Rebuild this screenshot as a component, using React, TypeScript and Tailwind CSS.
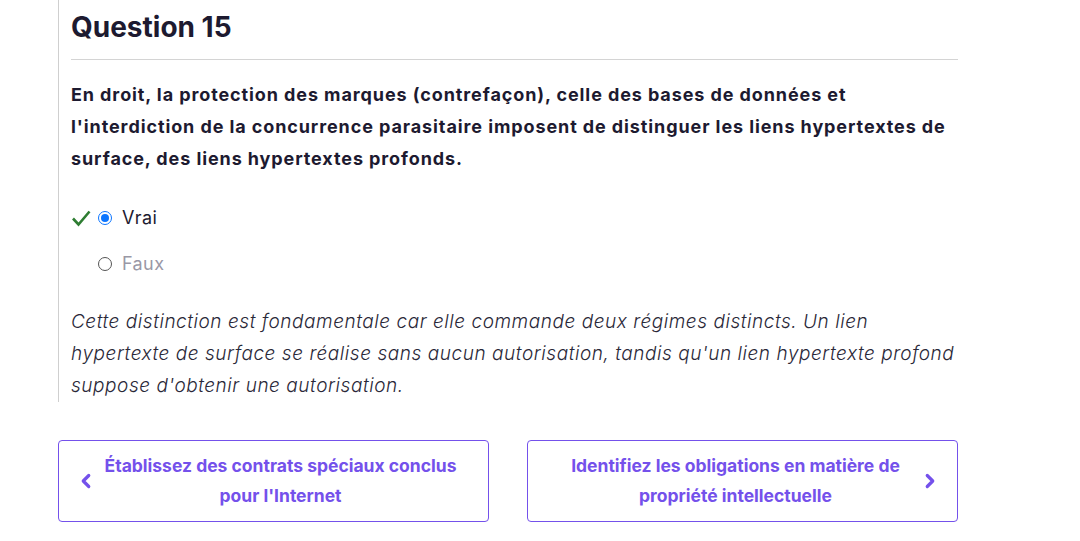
import { ChevronLeft, ChevronRight } from 'lucide-react';

const font = { fontFamily: 'Inter, "Noto Sans", sans-serif' };

function NavButton({ label, dir }: { label: string; dir: 'prev' | 'next' }) {
  return (
    <a
      href="#"
      className={
        dir === 'prev'
          ? 'flex h-[82px] w-[431px] items-center rounded-[4px] border border-[#7451eb] pl-4 pr-[24px] text-[#7451eb]'
          : 'flex h-[82px] w-[431px] items-center rounded-[4px] border border-[#7451eb] pl-[24px] pr-4 text-[#7451eb]'
      }
    >
      {dir === 'prev' && <ChevronLeft size={22} strokeWidth={3.5} className="shrink-0" />}
      <span className="flex-1 px-[4px] text-center text-[17.5px] font-bold leading-[30px]">{label}</span>
      {dir === 'next' && <ChevronRight size={22} strokeWidth={3.5} className="shrink-0" />}
    </a>
  );
}

export default function App() {
  return (
    <div className="min-h-[541px] bg-white pl-[58px] text-[#1d1a30]" style={font}>
      <div className="w-[900px] border-l border-[#cfcfcf] pb-0 pl-[12px]">
        <h2 className="pt-[8px] pb-[13px] text-[28px] font-bold leading-[38px]">Question 15</h2>
        <div className="h-px bg-[#d4d4d4]" />
        <p className="mt-[19px] text-[18px] font-bold leading-[32px] tracking-[0.9px]">
          En droit, la protection des marques (contrefaçon), celle des bases de données et l'interdiction de la
          concurrence parasitaire imposent de distinguer les liens hypertextes de surface, des liens hypertextes
          profonds.
        </p>
        <div className="mt-[29px] flex flex-col gap-[18px] text-[18px] leading-[28px] tracking-[0.4px]">
          <label className="flex items-center">
            <svg width="20" height="18" viewBox="0 0 20 18" className="mr-[7px]">
              <path d="M2 9.5 L7.5 15.5 L18.5 2.5" fill="none" stroke="#2e7d32" strokeWidth="2.6" />
            </svg>
            <span className="mr-[10px] flex h-[14px] w-[14px] items-center justify-center rounded-full border-[1.5px] border-[#0b75ff] bg-white">
              <span className="h-[8px] w-[8px] rounded-full bg-[#0b75ff]" />
            </span>
            <span className="text-[#1d1a30]">Vrai</span>
          </label>
          <label className="flex items-center pl-[27px]">
            <span className="mr-[10px] h-[14px] w-[14px] rounded-full border-[1.5px] border-[#555]" />
            <span className="text-[#9a98a6]">Faux</span>
          </label>
        </div>
        <p className="mt-[28px] pb-0 text-[19px] font-light italic leading-[32px] tracking-[0.55px] text-[#2a2838]">
          Cette distinction est fondamentale car elle commande deux régimes distincts. Un lien hypertexte de surface se
          réalise sans aucun autorisation, tandis qu'un lien hypertexte profond suppose d'obtenir une autorisation.
        </p>
      </div>
      <div className="mt-[38px] flex w-[900px] justify-between">
        <NavButton dir="prev" label="Établissez des contrats spéciaux conclus pour l'Internet" />
        <NavButton dir="next" label="Identifiez les obligations en matière de propriété intellectuelle" />
      </div>
    </div>
  );
}
